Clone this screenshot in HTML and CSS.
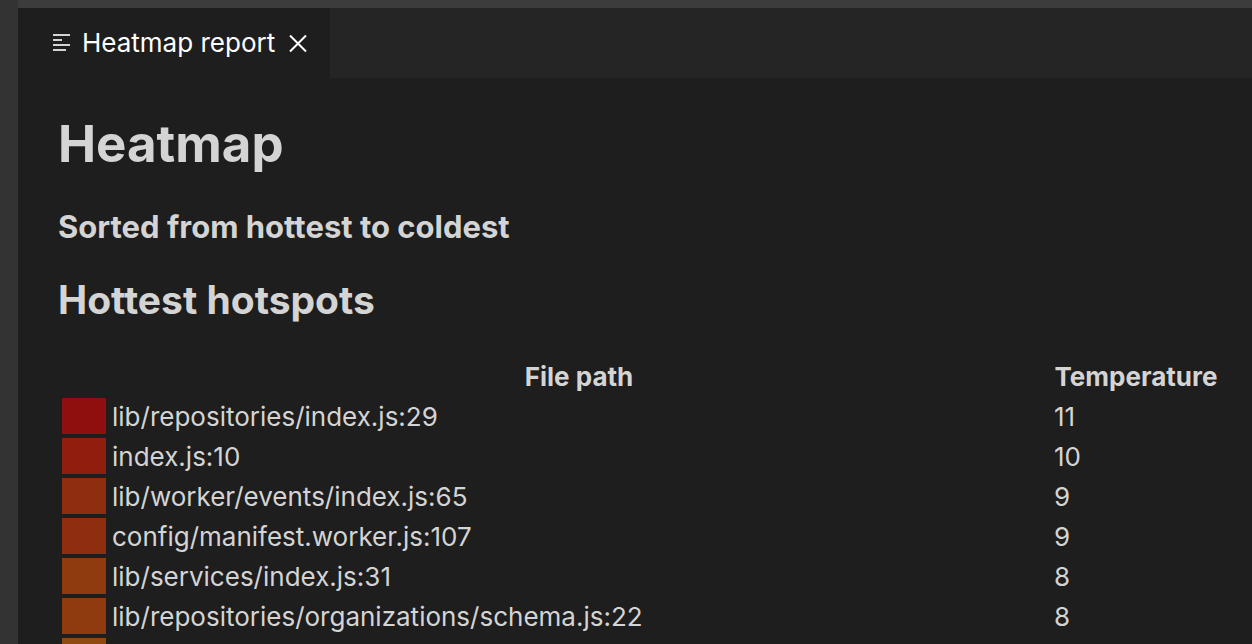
FILE: index.html
```html
<!DOCTYPE html>
<html lang="en">
<head>
<meta charset="utf-8">
<title>Heatmap report</title>
<link rel="stylesheet" href="styles.css">
</head>
<body>
<div class="editor">
  <header class="tab-bar">
    <div class="tab">
      <svg class="tab-icon" viewBox="0 0 18 18" aria-hidden="true"><path d="M1 1h17M1 6h9M1 11h17M1 16h13"/></svg>
      <span class="tab-title">Heatmap report</span>
      <button class="tab-close" type="button" aria-label="Close"><svg viewBox="0 0 18 18" aria-hidden="true"><path d="M1 1.5l16 16M17 1.5L1 17.5"/></svg></button>
    </div>
  </header>
  <main class="report">
    <h1>Heatmap</h1>
    <h3>Sorted from hottest to coldest</h3>
    <h2>Hottest hotspots</h2>
    <table class="hotspots">
      <thead><tr><th class="swatch-col"></th><th>File path</th><th class="temp-col">Temperature</th></tr></thead>
      <tbody>
        <tr><td class="heat-11"></td><td>lib/repositories/index.js:29</td><td>11</td></tr>
        <tr><td class="heat-10"></td><td>index.js:10</td><td>10</td></tr>
        <tr><td class="heat-9"></td><td>lib/worker/events/index.js:65</td><td>9</td></tr>
        <tr><td class="heat-9"></td><td>config/manifest.worker.js:107</td><td>9</td></tr>
        <tr><td class="heat-8"></td><td>lib/services/index.js:31</td><td>8</td></tr>
        <tr><td class="heat-8"></td><td>lib/repositories/organizations/schema.js:22</td><td>8</td></tr>
        <tr><td class="heat-7"></td><td></td><td></td></tr>
      </tbody>
    </table>
  </main>
</div>
</body>
</html>
```
FILE: styles.css
```css
* { box-sizing: border-box; }
body {
  margin: 0;
  height: 100vh;
  overflow: hidden;
  background: #333333;
  color: #d4d4d4;
  font: 26px/34px Inter, sans-serif;
}
.editor {
  height: 100vh;
  overflow: hidden;
  margin-left: 18px;
  border-top: 8px solid #3c3c3c;
  background: #1e1e1e;
}
.tab-bar { display: flex; height: 70px; background: #252526; }
.tab {
  display: flex;
  align-items: center;
  padding: 0 23px 0 34px;
  background: #1e1e1e;
  color: #ffffff;
}
.tab-icon { width: 18px; height: 18px; margin-right: 12px; color: #d4d4d4; }
.tab-close { display: flex; margin-left: 14px; padding: 0; border: 0; background: none; color: inherit; }
.tab-close svg { width: 18px; height: 18px; overflow: visible; }
svg path { fill: none; stroke: currentColor; stroke-width: 2; }
.report { padding: 32px 28px 0 40px; }
h1, h2, h3 { margin: 0; }
h1 { font-size: 51px; line-height: 68px; }
h3 { margin-top: 31px; font-size: 31px; line-height: 36px; }
h2 { margin-top: 31px; font-size: 39px; line-height: 48px; }
.hotspots { width: 100%; margin-top: 30px; border-spacing: 4px; }
th, td { height: 36px; padding: 2px 2px 0; text-align: left; }
th { text-align: center; }
.swatch-col { width: 44px; }
.temp-col { width: 168px; }
.heat-11 { background: #8f0f0f; }
.heat-10 { background: #8f1e0f; }
.heat-9 { background: #8f2d0f; }
.heat-8 { background: #8f3b0f; }
.heat-7 { background: #8f4a0f; }
```
